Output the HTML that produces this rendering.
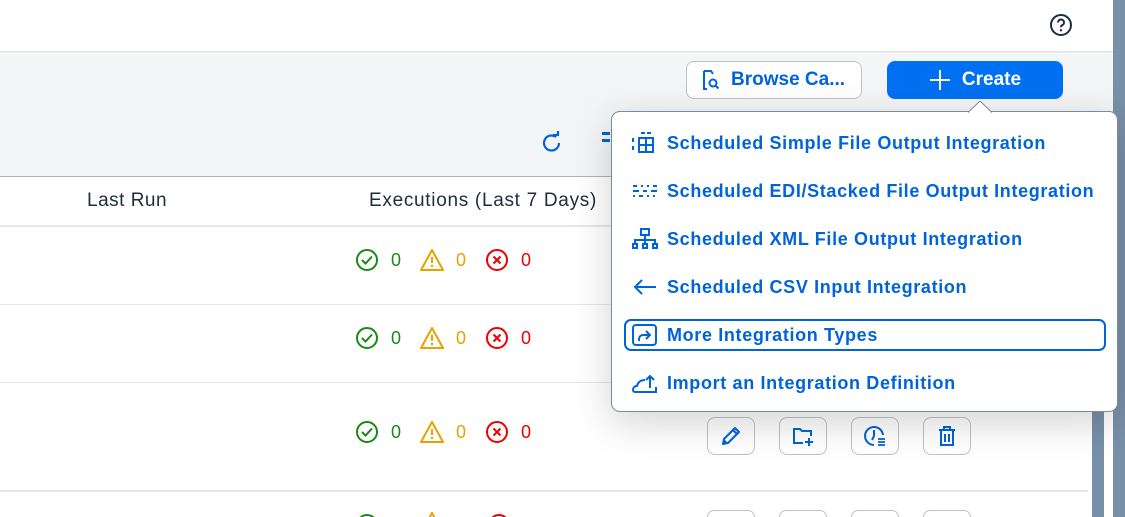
<!DOCTYPE html>
<html><head><meta charset="utf-8"><style>
*{box-sizing:border-box;margin:0;padding:0}
html,body{width:1125px;height:517px;overflow:hidden}
body{position:relative;background:#fff;font-family:"Liberation Sans",sans-serif;color:#1d2d3e}
#wrap{position:absolute;left:0;top:0;width:1125px;height:517px;overflow:hidden}
.abs{position:absolute}
.top{left:0;top:0;width:1113px;height:53px;background:#fff;border-bottom:2px solid #e5e7ea}
.tool{left:0;top:54px;width:1113px;height:123px;background:#f4f5f7;border-bottom:1px solid #a9b4be}
.hdr{left:0;top:177px;width:1088px;height:50px;border-bottom:2px solid #e5e7ea;font-size:19px;letter-spacing:0.7px}
.sep{left:0;width:1088px;height:1px;background:#e5e7ea}
.btn{border-radius:8px;font-size:19px;font-weight:bold;display:flex;align-items:center}
.menu{left:611px;top:111px;width:507px;height:301px;background:#fff;border:1px solid #7d8b99;border-radius:9px;box-shadow:0 10px 40px rgba(0,0,0,.18)}
.item{position:absolute;left:20px;height:32px;display:flex;align-items:center;color:#0064d9;font-size:18px;font-weight:bold;letter-spacing:0.65px;white-space:nowrap}
.item svg{width:26px;height:22px;margin-right:9px;flex:none}
.st{position:absolute;display:flex;align-items:center;font-size:18px}
.ab{position:absolute;width:48px;height:38px;border:1px solid #bcc3ca;border-radius:8px;background:#fff;display:flex;align-items:center;justify-content:center}
</style></head><body><div id="wrap">
<div class="abs top"></div>
<svg class="abs" style="left:1049px;top:13px" width="24" height="24" viewBox="0 0 24 24"><circle cx="12" cy="12" r="10" fill="none" stroke="#1d2d3e" stroke-width="2"/><path d="M9 9.5a3 3 0 1 1 4 2.8c-.8.4-1 1-1 2" fill="none" stroke="#1d2d3e" stroke-width="2"/><circle cx="12" cy="17.3" r="1.2" fill="#1d2d3e"/></svg>
<div class="abs tool"></div>
<div class="abs" style="left:1113px;top:0;width:12px;height:517px;background:#7890a8"></div>
<div class="abs" style="left:1092px;top:150px;width:12px;height:367px;background:#7890a8"></div>
<div class="abs" style="left:1088px;top:177px;width:4px;height:340px;background:#fff"></div>

<div class="abs btn" style="left:686px;top:61px;width:176px;height:38px;background:#fff;border:1px solid #bcc3ca;color:#0064d9;padding-left:12px">
<svg width="22" height="24" viewBox="0 0 22 24" style="margin-right:10px"><path d="M5 3h7l2 3 M5 3v18h3" fill="none" stroke="#0064d9" stroke-width="2"/><circle cx="14" cy="15" r="3.5" fill="none" stroke="#0064d9" stroke-width="2"/><path d="M16.5 17.5l3 3" stroke="#0064d9" stroke-width="2"/></svg>Browse Ca...</div>
<div class="abs btn" style="left:887px;top:61px;width:176px;height:38px;background:#0070f2;color:#fff;justify-content:center">
<svg width="22" height="22" viewBox="0 0 22 22" style="margin-right:11px"><path d="M11 1v20M1 11h20" stroke="#fff" stroke-width="2"/></svg>Create</div>

<svg class="abs" style="left:540px;top:131px" width="24" height="24" viewBox="0 0 24 24"><path d="M19 12a7.5 7.5 0 1 1-3-6" fill="none" stroke="#0064d9" stroke-width="2.2"/><path d="M13 4h5v-4" fill="none" stroke="#0064d9" stroke-width="2.2"/></svg>
<div class="abs" style="left:602px;top:132px;width:8px;height:3px;background:#0064d9"></div>
<div class="abs" style="left:602px;top:139px;width:8px;height:3px;background:#0064d9"></div>

<div class="abs hdr"><span class="abs" style="left:87px;top:13px;letter-spacing:0.5px">Last Run</span><span class="abs" style="left:369px;top:13px">Executions (Last 7 Days)</span></div>
<div class="abs sep" style="top:304px"></div>
<div class="abs sep" style="top:382px"></div>
<div class="abs sep" style="top:490px;height:2px"></div>

<div class="st" style="left:355px;top:248px"><svg width="24" height="24" viewBox="0 0 24 24"><circle cx="12" cy="12" r="10" fill="none" stroke="#188918" stroke-width="2"/><path d="M7 12l3.5 3.5 6.5-7" fill="none" stroke="#188918" stroke-width="2"/></svg><span style="color:#188918;margin:0 19px 0 12px">0</span><svg width="24" height="24" viewBox="0 0 24 24"><path d="M12 2L23 22H1z" fill="none" stroke="#e9a100" stroke-width="2" stroke-linejoin="round"/><path d="M12 9v6" stroke="#e9a100" stroke-width="2"/><circle cx="12" cy="18" r="1.2" fill="#e9a100"/></svg><span style="color:#e9a100;margin:0 19px 0 12px">0</span><svg width="24" height="24" viewBox="0 0 24 24"><circle cx="12" cy="12" r="10" fill="none" stroke="#e00" stroke-width="2"/><path d="M8.5 8.5l7 7M15.5 8.5l-7 7" stroke="#e00" stroke-width="2"/></svg><span style="color:#e00;margin-left:12px">0</span></div>
<div class="st" style="left:355px;top:326px"><svg width="24" height="24" viewBox="0 0 24 24"><circle cx="12" cy="12" r="10" fill="none" stroke="#188918" stroke-width="2"/><path d="M7 12l3.5 3.5 6.5-7" fill="none" stroke="#188918" stroke-width="2"/></svg><span style="color:#188918;margin:0 19px 0 12px">0</span><svg width="24" height="24" viewBox="0 0 24 24"><path d="M12 2L23 22H1z" fill="none" stroke="#e9a100" stroke-width="2" stroke-linejoin="round"/><path d="M12 9v6" stroke="#e9a100" stroke-width="2"/><circle cx="12" cy="18" r="1.2" fill="#e9a100"/></svg><span style="color:#e9a100;margin:0 19px 0 12px">0</span><svg width="24" height="24" viewBox="0 0 24 24"><circle cx="12" cy="12" r="10" fill="none" stroke="#e00" stroke-width="2"/><path d="M8.5 8.5l7 7M15.5 8.5l-7 7" stroke="#e00" stroke-width="2"/></svg><span style="color:#e00;margin-left:12px">0</span></div>
<div class="st" style="left:355px;top:420px"><svg width="24" height="24" viewBox="0 0 24 24"><circle cx="12" cy="12" r="10" fill="none" stroke="#188918" stroke-width="2"/><path d="M7 12l3.5 3.5 6.5-7" fill="none" stroke="#188918" stroke-width="2"/></svg><span style="color:#188918;margin:0 19px 0 12px">0</span><svg width="24" height="24" viewBox="0 0 24 24"><path d="M12 2L23 22H1z" fill="none" stroke="#e9a100" stroke-width="2" stroke-linejoin="round"/><path d="M12 9v6" stroke="#e9a100" stroke-width="2"/><circle cx="12" cy="18" r="1.2" fill="#e9a100"/></svg><span style="color:#e9a100;margin:0 19px 0 12px">0</span><svg width="24" height="24" viewBox="0 0 24 24"><circle cx="12" cy="12" r="10" fill="none" stroke="#e00" stroke-width="2"/><path d="M8.5 8.5l7 7M15.5 8.5l-7 7" stroke="#e00" stroke-width="2"/></svg><span style="color:#e00;margin-left:12px">0</span></div>
<svg class="abs" style="left:355px;top:512px" width="24" height="5" viewBox="0 0 24 5"><circle cx="12" cy="13" r="10" fill="none" stroke="#188918" stroke-width="2"/></svg>
<svg class="abs" style="left:420px;top:512px" width="24" height="5" viewBox="0 0 24 5"><path d="M12 1L23 21H1z" fill="none" stroke="#e9a100" stroke-width="2"/></svg>
<svg class="abs" style="left:487px;top:512px" width="24" height="5" viewBox="0 0 24 5"><circle cx="12" cy="13" r="10" fill="none" stroke="#e00" stroke-width="2"/></svg>

<div class="ab" style="left:707px;top:417px"><svg width="24" height="24" viewBox="0 0 24 24"><path d="M4 20l1-5L16 4l4 4L9 19z M14 6l4 4" fill="none" stroke="#0064d9" stroke-width="2" stroke-linejoin="round"/><path d="M4 20l1-5 4 4z" fill="#0064d9"/></svg></div>
<div class="ab" style="left:779px;top:417px"><svg width="24" height="24" viewBox="0 0 24 24"><path d="M12 19H3V5h6l2 2h9v5" fill="none" stroke="#0064d9" stroke-width="2"/><path d="M18 14v8M14 18h8" stroke="#0064d9" stroke-width="2"/></svg></div>
<div class="ab" style="left:851px;top:417px"><svg width="24" height="24" viewBox="0 0 24 24"><path d="M11 21a9 9 0 1 1 9-10" fill="none" stroke="#0064d9" stroke-width="2"/><path d="M11 6v6l-2 4" fill="none" stroke="#0064d9" stroke-width="2"/><path d="M15 15h7M15 18h7M15 21h7" stroke="#0064d9" stroke-width="1.8"/></svg></div>
<div class="ab" style="left:923px;top:417px"><svg width="24" height="24" viewBox="0 0 24 24"><path d="M4 6h16M9 6V3h6v3M6 6v15h12V6M10 10v8M14 10v8" fill="none" stroke="#0064d9" stroke-width="2"/></svg></div>
<div class="ab" style="left:707px;top:510px;height:7px;border-bottom:none;border-radius:8px 8px 0 0"></div><div class="ab" style="left:779px;top:510px;height:7px;border-bottom:none;border-radius:8px 8px 0 0"></div><div class="ab" style="left:851px;top:510px;height:7px;border-bottom:none;border-radius:8px 8px 0 0"></div><div class="ab" style="left:923px;top:510px;height:7px;border-bottom:none;border-radius:8px 8px 0 0"></div>

<div class="abs menu">
<svg class="abs" style="left:356px;top:-11px" width="24" height="12" viewBox="0 0 24 12"><path d="M0 11.5L12 0l12 11.5" fill="#fff" stroke="#7d8b99" stroke-width="1"/></svg>
<div class="item" style="top:15px"><svg viewBox="0 0 26 22"><path d="M1 6v4M1 14v4" stroke="#0064d9" stroke-width="2.2"/><path d="M9 1h4M15 1h4" stroke="#0064d9" stroke-width="2"/><rect x="7" y="6" width="14" height="14" fill="none" stroke="#0064d9" stroke-width="2"/><path d="M7 13h14M14 6v14" stroke="#0064d9" stroke-width="2"/></svg>Scheduled Simple File Output Integration</div>
<div class="item" style="top:63px"><svg viewBox="0 0 26 22"><path d="M1 6h4M9 6h2M15 6h2M21 6h4M1 11h6M11 11h4M19 11h6M1 16h2M7 16h4M15 16h2M21 16h2" stroke="#0064d9" stroke-width="2"/></svg>Scheduled EDI/Stacked File Output Integration</div>
<div class="item" style="top:111px"><svg viewBox="0 0 26 22"><rect x="9" y="1" width="8" height="6" fill="none" stroke="#0064d9" stroke-width="2"/><path d="M13 7v5M3 16v-4h20v4M13 12v4" fill="none" stroke="#0064d9" stroke-width="2"/><rect x="1" y="16" width="4" height="4" fill="none" stroke="#0064d9" stroke-width="2"/><rect x="11" y="16" width="4" height="4" fill="none" stroke="#0064d9" stroke-width="2"/><rect x="21" y="16" width="4" height="4" fill="none" stroke="#0064d9" stroke-width="2"/></svg>Scheduled XML File Output Integration</div>
<div class="item" style="top:159px"><svg viewBox="0 0 26 22"><path d="M24 11H3M10 4l-7 7 7 7" fill="none" stroke="#0064d9" stroke-width="2"/></svg>Scheduled CSV Input Integration</div>
<div class="item" style="top:207px;left:12px;width:482px;border:2.5px solid #0064d9;border-radius:7px;padding-left:6px"><svg viewBox="0 0 26 22"><rect x="1" y="1" width="23" height="20" rx="3" fill="none" stroke="#0064d9" stroke-width="2"/><path d="M7 17v-2a4 4 0 0 1 4-4h7M14 7l4 4-4 4" fill="none" stroke="#0064d9" stroke-width="2"/></svg>More Integration Types</div>
<div class="item" style="top:255px"><svg viewBox="0 0 26 22"><path d="M8 20H3a2 2 0 0 1-2-2c0-2 1-4 4-4 1-4 4-6 8-6" fill="none" stroke="#0064d9" stroke-width="2"/><path d="M8 20h16v-5" fill="none" stroke="#0064d9" stroke-width="2"/><path d="M18 16V4M14 8l4-4 4 4" fill="none" stroke="#0064d9" stroke-width="2"/></svg>Import an Integration Definition</div>
</div>
</div></body></html>
